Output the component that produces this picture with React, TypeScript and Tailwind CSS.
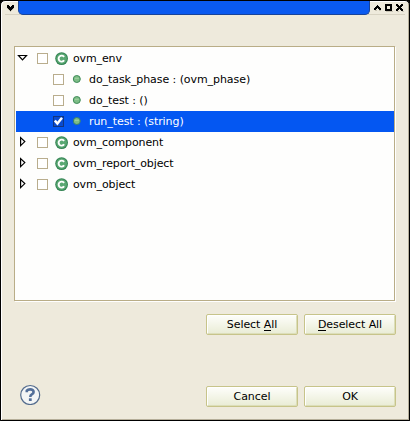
import React from 'react';

type Row = { label: string; child?: boolean; open?: boolean; selected?: boolean };

const rows: Row[] = [
  { label: 'ovm_env', open: true },
  { label: 'do_task_phase : (ovm_phase)', child: true },
  { label: 'do_test : ()', child: true },
  { label: 'run_test : (string)', child: true, selected: true },
  { label: 'ovm_component' },
  { label: 'ovm_report_object' },
  { label: 'ovm_object' },
];

function Arrow({ open }: { open?: boolean }) {
  return (
    <svg width="12" height="12" viewBox="0 0 12 12" className="block" fill="#fff" stroke="#000" strokeWidth="1.2">
      {open ? <path d="M2.5 3.5h8L6.5 7.8z" /> : <path d="M4.6 1.6v8L8.8 5.6z" />}
    </svg>
  );
}

function CheckBox({ checked }: { checked?: boolean }) {
  return (
    <span className={`block h-[11px] w-[11px] border ${checked ? 'border-[#12357f] bg-[#0a4bd0]' : 'border-[#b9ad8d] bg-white'}`}>
      {checked && (
        <svg width="9" height="9" viewBox="0 0 9 9" className="block" fill="none" stroke="#fff" strokeWidth="2.4">
          <path d="M0.9 3.6L3.4 6.6L8 0.8" />
        </svg>
      )}
    </span>
  );
}

function ClassIcon() {
  return (
    <svg width="14" height="14" viewBox="0 0 14 14" className="block">
      <circle cx="6.6" cy="6.6" r="6.4" fill="#358554" />
      <circle cx="6.6" cy="6.6" r="5.3" fill="#5aa873" />
      <path d="M9.1 4.9A3 3 0 1 0 9.1 8.3" fill="none" stroke="#fff" strokeWidth="1.9" />
    </svg>
  );
}

function MethodIcon({ selected }: { selected?: boolean }) {
  return (
    <svg width="9" height="9" viewBox="0 0 9 9" className="block">
      <circle cx="4.8" cy="4" r="3.5" fill="#7dbd86" stroke={selected ? '#37806f' : '#3f8b58'} />
      <path d="M2.8 3.3h4" stroke="#a3d3a2" />
    </svg>
  );
}

function TreeRow({ row }: { row: Row }) {
  return (
    <div className={`flex h-[21px] items-center ${row.selected ? 'bg-[#0457f2] text-white' : ''}`}>
      {row.child ? (
        <>
          <span className="w-[37px]" />
          <CheckBox checked={row.selected} />
          <span className="ml-[8px] w-[17px]"><MethodIcon selected={row.selected} /></span>
        </>
      ) : (
        <>
          <span className="w-[21px] pb-px"><Arrow open={row.open} /></span>
          <CheckBox />
          <span className="ml-[7px] w-[18px]"><ClassIcon /></span>
        </>
      )}
      <span className={`whitespace-pre pt-[2px] ${row.child ? 'tracking-[-0.07px]' : 'tracking-[-0.12px]'}`}>{row.label}</span>
    </div>
  );
}

function Button({ children }: { children: React.ReactNode }) {
  return (
    <button className="h-[21px] w-[92px] rounded-[2px] border border-[#c7c48a] bg-gradient-to-b from-[#fefefb] to-[#e9ecd5] text-center leading-[19px] tracking-[-0.08px] shadow-[inset_1px_1px_0_#fff,inset_-1px_-1px_0_#dcdeb9]">
      {children}
    </button>
  );
}

function Key({ children }: { children: string }) {
  return <span className="inline-block h-[13px] border-b border-black leading-[13px]">{children}</span>;
}

export default function App() {
  return (
    <div className="h-[421px] w-[410px] bg-black font-['DejaVu_Sans',sans-serif] text-[11px] text-black">
      <div className="flex h-[421px] flex-col rounded-t-[5px] border border-black bg-[#eeeadc] shadow-[inset_1px_1px_0_#fff,inset_-1px_-1px_0_#b5ae99]">
        <div className="mx-[4px] flex h-[14px] shrink-0 border-b border-[#d8d3c3]">
          <svg width="13" height="13" viewBox="0 0 13 13" fill="none" shapeRendering="crispEdges">
            <path d="M2 7.5h1M8 7.5h1M3 8.5h1M7 8.5h1M4 9.5h1M6 9.5h1M5 10.5h1" stroke="#c9c4b4" />
            <path d="M2 4.5h2M7 4.5h2M2 5.5h3M6 5.5h3M2 6.5h7M3 7.5h5M4 8.5h3M5 9.5h1" stroke="#000" />
          </svg>
          <div className="h-[14px] w-[352px] rounded-b-[5px] border-b border-l border-r border-[#18449a] bg-[#0a5af0]" />
          <svg width="35" height="14" viewBox="370 1 35 14" fill="none" shapeRendering="crispEdges">
            <path d="M375 10.5h2M379 10.5h2M386 11.5h7M397 11.5h2M402 11.5h2" stroke="#c9c4b4" />
            <path d="M377 5.5h1M376 6.5h3M375 7.5h5M374 8.5h3M378 8.5h3M374 9.5h2M379 9.5h2" stroke="#000" />
            <rect x="386" y="5" width="5" height="5" stroke="#000" strokeWidth="2" />
            <path d="M396 4.5h2M401 4.5h2M396 5.5h3M400 5.5h3M397 6.5h5M398 7.5h3M397 8.5h5M396 9.5h3M400 9.5h3M396 10.5h2M401 10.5h2" stroke="#000" />
          </svg>
        </div>
        <div className="ml-[13px] mt-[31px] h-[255px] w-[381px] shrink-0 border border-[#b9ad87] bg-[#fefefd] pl-px pt-px shadow-[1px_1px_0_#fff]">
          {rows.map((row) => <TreeRow key={row.label} row={row} />)}
        </div>
        <div className="ml-[205px] mt-[13px] flex gap-[6px]">
          <Button>Select <Key>A</Key>ll</Button>
          <Button><Key>D</Key>eselect All</Button>
        </div>
        <div className="mt-[49px] flex items-start pl-[19px]">
          <svg width="21" height="21" viewBox="0 0 21 21" className="mr-[165px]">
            <circle cx="10.2" cy="11" r="9.5" fill="#f3f5f5" stroke="#526b8d" strokeWidth="1.2" />
            <path d="M6.8 8.2V6.6Q7.8 5.4 10.1 5.4Q13.6 5.4 13.6 7.9Q13.6 9.4 11.8 10.4Q10.3 11.2 10.3 13" fill="none" stroke="#536f99" strokeWidth="2.6" />
            <rect x="8.9" y="14.3" width="2.8" height="2.7" fill="#536f99" />
          </svg>
          <div className="mt-[2px] flex gap-[6px]">
            <Button>Cancel</Button>
            <Button>OK</Button>
          </div>
        </div>
      </div>
    </div>
  );
}
